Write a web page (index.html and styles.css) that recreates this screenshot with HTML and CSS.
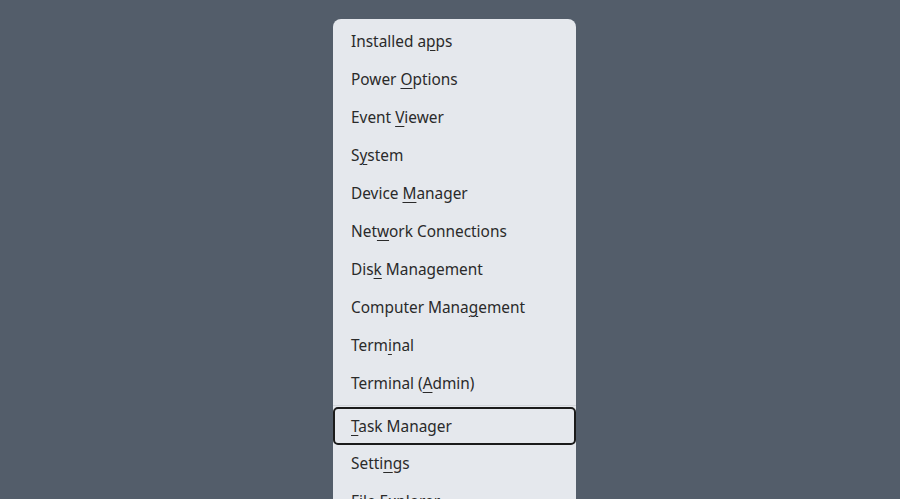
FILE: index.html
```html
<!DOCTYPE html>
<html lang="en">
<head>
<meta charset="utf-8"/>
<meta content="width=device-width, initial-scale=1.0" name="viewport"/>
<title>Quick Link Menu</title>
<link rel="stylesheet" href="styles.css">
</head>
<body>
<div class="menu">
<div class="item">Installed a<u>p</u>ps</div>
<div class="item">Power <u>O</u>ptions</div>
<div class="item">Event <u>V</u>iewer</div>
<div class="item">S<u>y</u>stem</div>
<div class="item">Device <u>M</u>anager</div>
<div class="item">Net<u>w</u>ork Connections</div>
<div class="item">Dis<u>k</u> Management</div>
<div class="item">Computer Mana<u>g</u>ement</div>
<div class="item">Term<u>i</u>nal</div>
<div class="item">Terminal (<u>A</u>dmin)</div>
<div class="separator"></div>
<div class="item focused"><u>T</u>ask Manager</div>
<div class="item">Setti<u>n</u>gs</div>
<div class="item">File E<u>x</u>plorer</div>
</div>
</body>
</html>
```

FILE: styles.css
```css
* {
    margin: 0;
    padding: 0;
    box-sizing: border-box;
}

html, body {
    height: 100%;
    overflow: hidden;
}

body {
    font-family: 'Noto Sans', 'Open Sans', sans-serif;
    background: #535d6a;
    display: flex;
    justify-content: center;
    padding-top: 19px;
}

.menu {
    width: 243px;
    margin-left: 9px;
    background: #e5e8ed;
    border-radius: 8px;
    padding-top: 4px;
    height: 520px;
}

.item {
    height: 38px;
    line-height: 34px;
    padding-left: 16px;
    font-size: 15.4px;
    color: #2a2a2a;
    border: 2px solid transparent;
    border-radius: 5px;
    white-space: nowrap;
}

.item u {
    text-underline-offset: 3px;
    text-decoration-thickness: 1px;
}

.item.focused {
    border-color: #1b1b1b;
    line-height: 36px;
}

.separator {
    height: 1px;
    background: #d2d5da;
    margin: 2px 0 1px;
}
```
